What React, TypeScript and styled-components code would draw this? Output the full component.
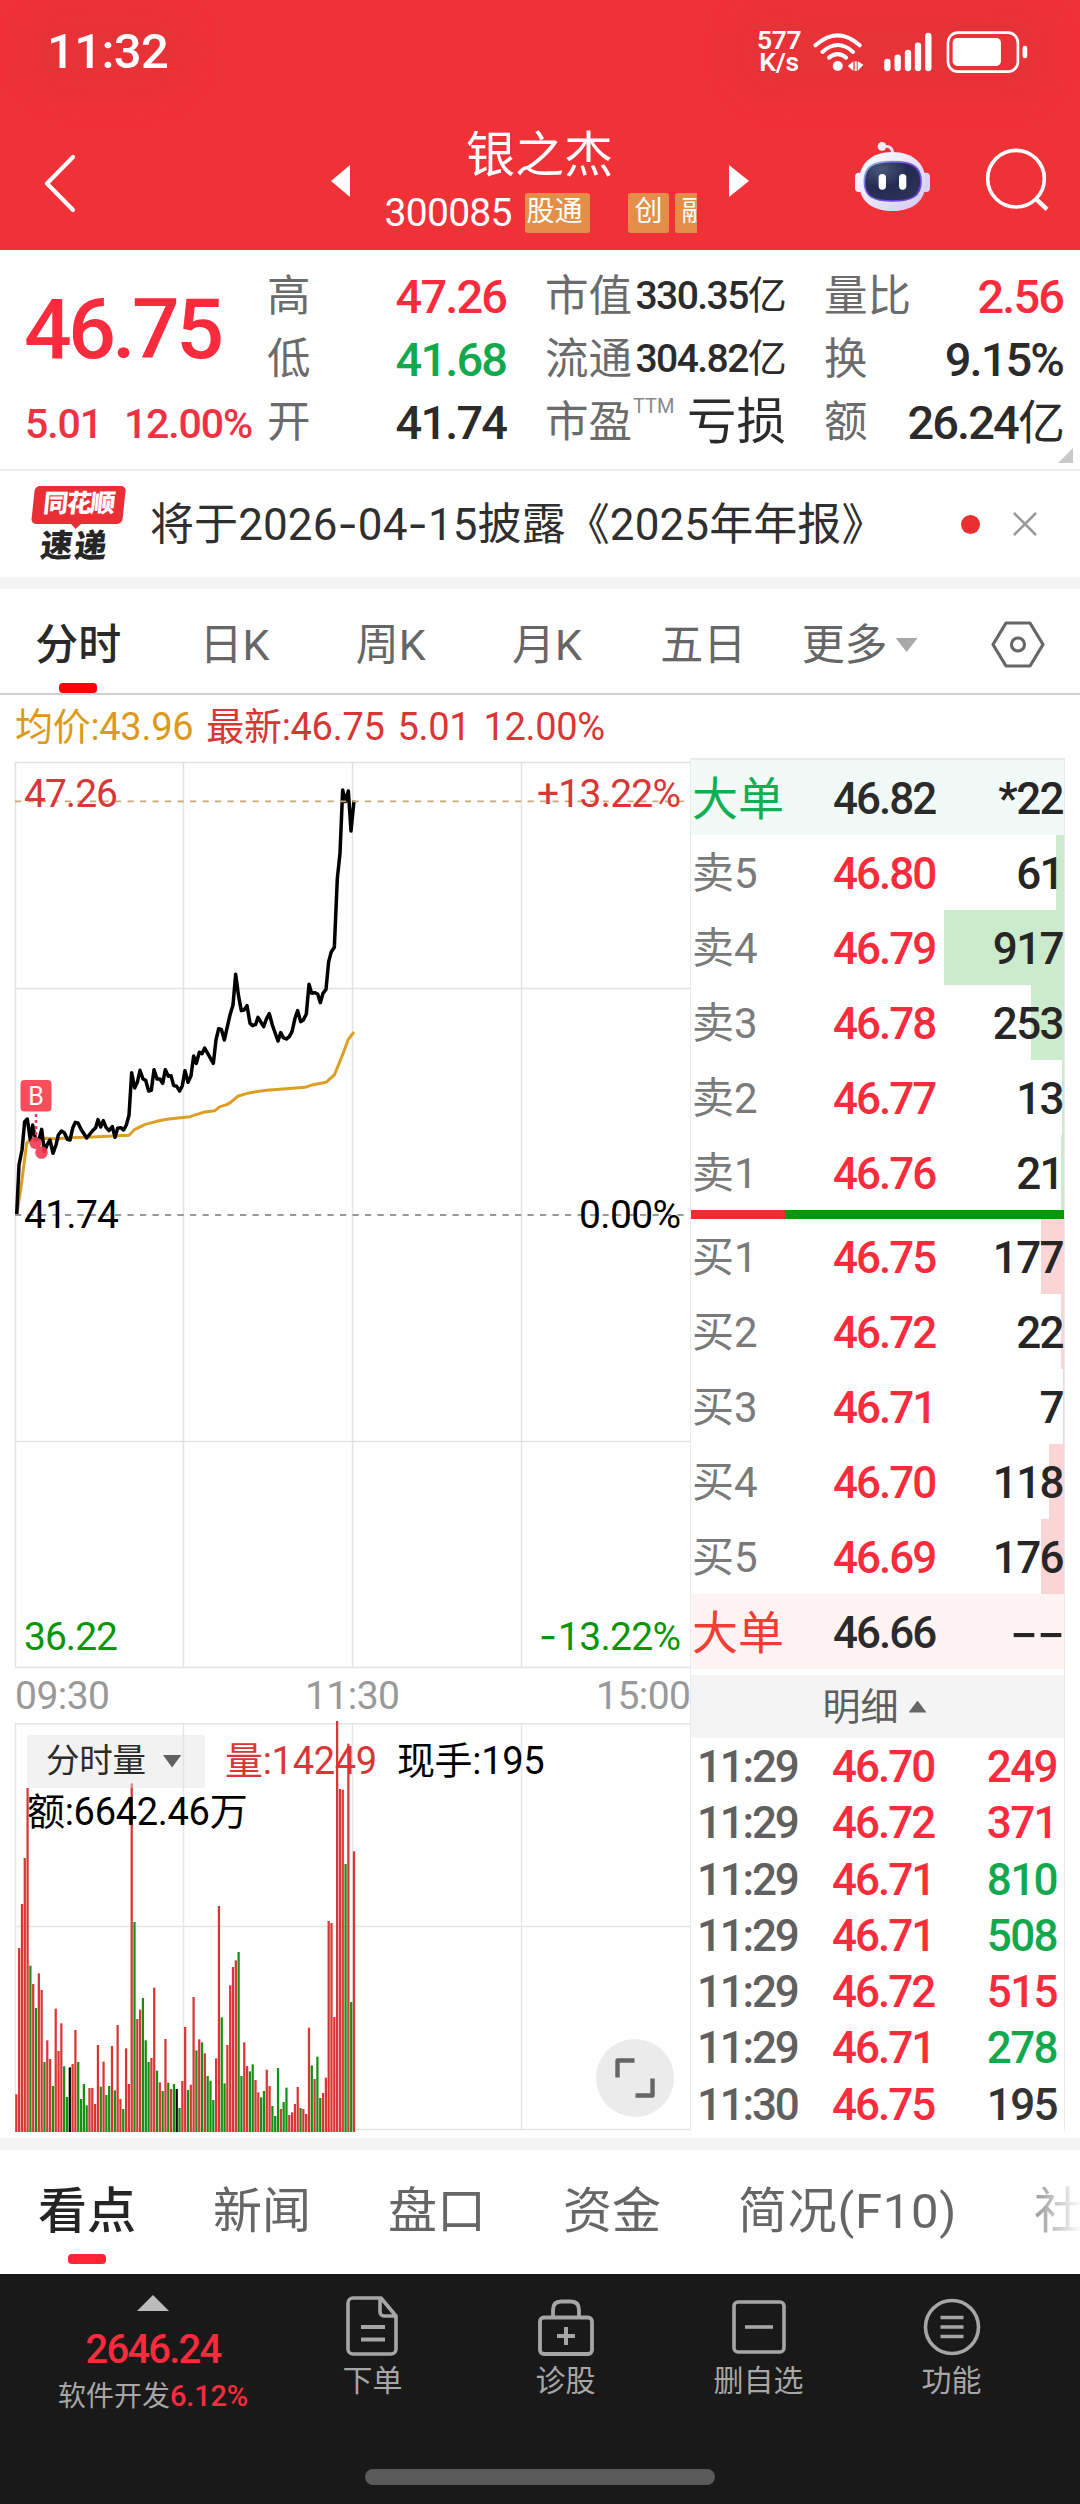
import React from "react";
import styled, { createGlobalStyle, css } from "styled-components";

const RED = "#f92b3c";
const GREEN = "#12a84e";
const DARK = "#2b2b2b";
const GREY = "#666666";
const FONT = `Roboto, "Noto Sans CJK SC", sans-serif`;

const Global = createGlobalStyle`
  html, body { margin: 0; padding: 0; background: #fff; }
  * { box-sizing: border-box; }
  svg { display: block; flex: none; overflow: visible; }
`;

const Page = styled.main`
  width: 1080px;
  height: 2504px;
  display: flex;
  flex-direction: column;
  background: #fff;
  font-family: ${FONT};
  overflow: hidden;
  white-space: nowrap;
`;

/* ---------- header ---------- */
const Header = styled.header`
  height: 250px;
  flex: none;
  background: #f13138;
  color: #fff;
`;
const StatusBar = styled.div`
  height: 104px;
  padding: 0 51px 0 47px;
  display: flex;
  justify-content: space-between;
  align-items: center;
`;
const halo = css`
  background: rgba(150, 60, 60, 0.1);
  box-shadow: 0 0 34px 26px rgba(150, 60, 60, 0.1);
  border-radius: 20px;
`;
const Clock = styled.div`
  ${halo}
  font-size: 49px;
  font-weight: 500;
  line-height: 42px;
  letter-spacing: -0.6px;
`;
const StatusIcons = styled.div`
  ${halo}
  display: flex;
  align-items: center;
  gap: 12px;
`;
const Speed = styled.div`
  font-size: 26.5px;
  line-height: 22px;
  font-weight: 600;
  text-align: center;
  letter-spacing: -0.4px;
  width: 44px;
  padding-bottom: 3px;
`;
const SpeedLine = styled.div`
  height: 22px;
`;
const NavBar = styled.div`
  height: 146px;
  display: grid;
  grid-template-columns: 331px 418px 331px;
`;
const BackCell = styled.div`
  padding: 51px 0 0 44px;
`;
const Stock = styled.div`
  display: grid;
  grid-template-columns: 19px 1fr 20px;
  align-items: start;
`;
const ArrowCell = styled.div`
  padding-top: 61px;
`;
const StockInfo = styled.div`
  display: flex;
  flex-direction: column;
  align-items: center;
`;
const StockName = styled.div`
  font-size: 49px;
  line-height: 60px;
  padding-top: 22px;
`;
const CodeRow = styled.div`
  display: flex;
  align-items: center;
  height: 40px;
  margin-top: 7px;
`;
const Code = styled.div`
  font-size: 39px;
  line-height: 40px;
  width: 142px;
  padding-left: 2px;
  letter-spacing: -0.7px;
`;
const Tags = styled.div`
  display: flex;
  width: 172px;
  overflow: hidden;
`;
const Tag = styled.div<{ $w: number; $gap?: number; $shift?: number }>`
  width: ${(p) => p.$w}px;
  height: 40px;
  flex: none;
  margin-right: ${(p) => p.$gap ?? 0}px;
  background: #e58e4a;
  border-radius: 3px;
  font-size: 28px;
  line-height: 38px;
  text-indent: ${(p) => p.$shift ?? 7}px;
  overflow: hidden;
`;
const HeaderActions = styled.div`
  display: flex;
  gap: 56px;
  padding: 38px 0 0 106px;
`;
const SearchSlot = styled.div`
  padding-top: 6px;
`;

/* ---------- quote panel ---------- */
const Quote = styled.section`
  height: 221px;
  flex: none;
  padding: 15px 16px 0 26px;
  display: flex;
  border-bottom: 2px solid #ececec;
  position: relative;
`;
const PriceCol = styled.div`
  width: 241px;
  color: ${RED};
`;
const BigPrice = styled.div`
  font-size: 84px;
  font-weight: 500;
  line-height: 130px;
  height: 128px;
  letter-spacing: -3.6px;
  margin-left: -2px;
`;
const Change = styled.div`
  font-size: 41px;
  line-height: 62px;
  color: #ee3143;
  font-weight: 500;
  display: flex;
  gap: 22px;
  letter-spacing: -1.1px;
  margin-left: -1px;
`;
const StatCol = styled.div<{ $w: number; $gap: number }>`
  width: ${(p) => p.$w}px;
  margin-right: ${(p) => p.$gap}px;
`;
const Stat = styled.div`
  height: 63px;
  display: flex;
  justify-content: space-between;
  align-items: center;
  line-height: 63px;
`;
const StatLabel = styled.span`
  font-size: 43.5px;
  color: #6b6b6b;
`;
const Ttm = styled.sup`
  font-size: 20px;
  line-height: 20px;
  color: #888;
  vertical-align: 24px;
  margin-left: 1px;
`;
const StatValue = styled.span<{ $c?: string; $s?: number; $thin?: boolean }>`
  font-size: ${(p) => p.$s ?? 47}px;
  font-weight: ${(p) => (p.$thin ? 400 : 500)};
  letter-spacing: ${(p) => (p.$thin ? 0 : -0.04)}em;
  margin-right: ${(p) => (p.$thin ? 0 : 0.02)}em;
  color: ${(p) => p.$c ?? DARK};
`;
const Unit = styled.span`
  font-weight: 400;
`;
const Corner = styled.div`
  position: absolute;
  right: 7px;
  bottom: 6px;
  border-left: 15px solid transparent;
  border-bottom: 15px solid #c8c8c8;
`;

/* ---------- notice ---------- */
const Notice = styled.section`
  height: 106px;
  flex: none;
  display: flex;
  align-items: center;
  padding: 0 43px 0 31px;
`;
const Logo = styled.div`
  width: 93px;
  margin-right: 26px;
  display: flex;
  flex-direction: column;
  transform: skewX(-6deg);
  font-weight: 900;
`;
const LogoTop = styled.div`
  position: relative;
  width: 91px;
  height: 38px;
  border-radius: 5px;
  background: #e92f33;
  color: #fff;
  font-size: 25px;
  line-height: 36px;
  letter-spacing: -1.5px;
  text-align: center;
  &::after {
    content: "";
    position: absolute;
    left: 39px;
    top: 37px;
    border: 6px solid transparent;
    border-top: 6px solid #e92f33;
    border-bottom: 0;
  }
`;
const LogoBottom = styled.div`
  margin-left: 12px;
  font-size: 32px;
  line-height: 34px;
  padding-top: 5px;
  letter-spacing: 2px;
  color: #262626;
`;
const NoticeText = styled.div`
  flex: 1;
  font-size: 44px;
  letter-spacing: 0.1px;
  color: #2f2f2f;
  line-height: 60px;
`;
const Hyphen = styled.span`
  font-family: Inter, sans-serif;
`;
const WideHyphens = styled(Hyphen)`
  display: inline-block;
  transform: scaleX(1.45);
  transform-origin: 100% 50%;
`;
const Dot = styled.div`
  width: 19px;
  height: 19px;
  border-radius: 50%;
  background: #e93030;
  margin-right: 33px;
`;
const Band = styled.div`
  height: 12px;
  flex: none;
  background: #f4f4f4;
`;

/* ---------- period tabs ---------- */
const PeriodTabs = styled.nav`
  height: 106px;
  flex: none;
  display: flex;
  border-bottom: 2px solid #d0d0d0;
`;
const PeriodTab = styled.div<{ $on?: boolean }>`
  width: 156.3px;
  display: flex;
  flex-direction: column;
  align-items: center;
  font-size: 43px;
  line-height: 60px;
  padding-top: 26px;
  color: ${(p) => (p.$on ? "#2a2a2a" : GREY)};
  font-weight: ${(p) => (p.$on ? 500 : 400)};
`;
const MoreLabel = styled.span`
  display: flex;
  align-items: center;
  gap: 8px;
`;
const Underline = styled.i<{ $c: string; $t: number }>`
  width: 38px;
  height: 10px;
  border-radius: 4px;
  margin-top: ${(p) => p.$t}px;
  background: ${(p) => p.$c};
`;
const Triangle = styled.i<{ $w: number; $h: number; $c: string; $up?: boolean }>`
  width: ${(p) => p.$w}px;
  height: ${(p) => p.$h}px;
  background: ${(p) => p.$c};
  clip-path: ${(p) => (p.$up ? "polygon(50% 0, 100% 100%, 0 100%)" : "polygon(0 0, 100% 0, 50% 100%)")};
`;
const SettingsCell = styled.div`
  padding: 32px 0 0 53px;
`;

/* ---------- summary ---------- */
const Summary = styled.div`
  height: 63px;
  flex: none;
  display: flex;
  gap: 13px;
  padding-left: 15px;
  font-size: 38px;
  line-height: 65px;
  letter-spacing: -0.3px;
  color: #d93636;
`;
const Average = styled.span`
  color: #dc9a1a;
`;

/* ---------- chart + order book ---------- */
const Trading = styled.section`
  height: 1380px;
  flex: none;
  display: flex;
`;
const ChartCol = styled.div`
  width: 690px;
`;
const VolumeArea = styled.div`
  position: relative;
  height: 408px;
`;
const VolumeTexts = styled.div`
  position: absolute;
  left: 27px;
  top: 10px;
  font-size: 39px;
  line-height: 56px;
  letter-spacing: -0.3px;
`;
const VolumeLine = styled.div`
  display: flex;
  align-items: center;
`;
const IndicatorButton = styled.div`
  width: 178px;
  height: 53px;
  border-radius: 3px;
  background: rgba(226, 226, 226, 0.45);
  color: #2b2b2b;
  font-size: 33.5px;
  display: flex;
  align-items: center;
  padding-left: 19px;
  gap: 17px;
  margin-right: 20px;
`;
const VolText = styled.span<{ $c: string; $mr?: number }>`
  color: ${(p) => p.$c};
  font-size: 38px;
  margin-right: ${(p) => p.$mr ?? 0}px;
`;
const Amount = styled.div`
  line-height: 47px;
  font-size: 38px;
`;
const Expand = styled.div`
  position: absolute;
  left: 596px;
  top: 316px;
  width: 78px;
  height: 78px;
  border-radius: 50%;
  background: #ebebeb;
  display: grid;
  place-items: center;
`;
const Book = styled.div`
  width: 375px;
  height: 1373px;
  border: solid #eaeaea;
  border-width: 2px 1px 0 1px;
`;
const BookRow = styled.div<{ $bg?: string }>`
  position: relative;
  height: 75px;
  display: grid;
  grid-template-columns: 141px 106px 1fr;
  padding: 0 2px 0 1px;
  background: ${(p) => p.$bg ?? "transparent"};
  line-height: 78px;
`;
const DepthBar = styled.i<{ $c: string }>`
  position: absolute;
  right: 0;
  top: 0;
  height: 75px;
  background: ${(p) => p.$c};
`;
const BookLabel = styled.span<{ $c?: string; $big?: boolean }>`
  position: relative;
  font-size: ${(p) => (p.$big ? 46 : 42)}px;
  color: ${(p) => p.$c ?? "#7a7a7a"};
`;
const BookPrice = styled.span<{ $c?: string }>`
  position: relative;
  font-size: 44px;
  font-weight: 500;
  letter-spacing: -2px;
  color: ${(p) => p.$c ?? RED};
`;
const BookVolume = styled.span<{ $c?: string }>`
  position: relative;
  font-size: 44px;
  font-weight: 500;
  letter-spacing: -1.6px;
  margin-right: -1px;
  text-align: right;
  color: ${(p) => p.$c ?? "#262626"};
`;
const Ratio = styled.div`
  height: 9px;
  background: linear-gradient(90deg, #e93030 0 25.1%, #009900 25.1%);
`;
const DetailHead = styled.div`
  height: 63px;
  margin-top: 6px;
  background: #f4f4f4;
  color: #5e5e5e;
  font-size: 38px;
  line-height: 62px;
  display: flex;
  align-items: center;
  justify-content: center;
  gap: 10px;
  padding-right: 6px;
`;
const TickRow = styled.div`
  height: 56.3px;
  display: grid;
  grid-template-columns: 135px 106px 1fr;
  padding: 0 8px 0 6px;
  line-height: 58px;
`;
const TickTime = styled(BookPrice)`
  color: #606060;
  letter-spacing: -2.2px;
`;

/* ---------- bottom ---------- */
const InfoTabs = styled.nav`
  height: 124px;
  flex: none;
  display: flex;
  gap: 77px;
  padding: 30px 0 0 38px;
  font-size: 49px;
  line-height: 64px;
  color: ${GREY};
  overflow: hidden;
`;
const InfoTab = styled.div<{ $on?: boolean; $fade?: boolean; $ls?: number }>`
  flex: none;
  display: flex;
  flex-direction: column;
  align-items: center;
  letter-spacing: ${(p) => p.$ls ?? 0}px;
  ${(p) => p.$on && css`color: #242424; font-weight: 500;`}
  ${(p) =>
    p.$fade &&
    css`
      color: transparent;
      background: linear-gradient(90deg, #999 0, #fff 48px);
      background-clip: text;
      -webkit-background-clip: text;
    `}
`;
const BottomBar = styled.footer`
  height: 230px;
  flex: none;
  background: #191919;
  display: flex;
  flex-direction: column;
  align-items: center;
  color: #a6a6a6;
`;
const BottomItems = styled.div`
  display: flex;
  width: 1080px;
  height: 195px;
`;
const IndexItem = styled.div`
  width: 276px;
  padding: 21px 0 0 30px;
  display: flex;
  flex-direction: column;
  align-items: center;
`;
const IndexValue = styled.div`
  color: ${RED};
  font-size: 40px;
  font-weight: 500;
  line-height: 44px;
  margin-top: 17px;
  letter-spacing: -1.8px;
`;
const IndexName = styled.div`
  font-size: 28px;
  line-height: 40px;
  margin-top: 4px;
`;
const IndexPct = styled.span`
  color: ${RED};
  font-weight: 500;
  font-size: 29px;
  letter-spacing: -0.2px;
`;
const NavItem = styled.div`
  width: 193px;
  padding-top: 22px;
  display: flex;
  flex-direction: column;
  align-items: center;
  font-size: 30px;
  line-height: 40px;
  gap: 5px;
`;
const HomeIndicator = styled.div`
  width: 350px;
  height: 16px;
  border-radius: 8px;
  background: #5a5a5a;
`;

/* ---------- data ---------- */
const PRICE =
  "50,1365 57,1215 66,1170 74,1085 82,1077 91,1140 98,1095 107,1140 118,1135 125,1108 133,1175 141,1155 150,1140 159,1180 168,1155 175,1125 184,1113 193,1118 202,1138 210,1140 218,1105 226,1087 234,1089 243,1108 260,1134 277,1113 287,1103 294,1079 302,1101 310,1082 318,1102 327,1112 337,1100 345,1132 353,1105 362,1103 371,1110 379,1095 387,1066 395,938 404,984 412,967 420,931 429,957 437,961 446,993 454,991 462,929 471,957 480,957 488,970 496,929 505,949 513,947 521,977 530,979 539,993 547,977 555,932 564,967 573,947 581,888 589,910 598,877 606,881 614,864 640,910 648,840 656,806 664,808 673,840 682,800 690,765 699,735 707,643 716,710 724,752 732,750 741,737 750,790 758,797 767,793 774,772 791,800 800,775 808,761 817,795 834,843 842,818 850,833 859,837 868,830 876,815 885,775 893,752 902,785 910,780 919,762 927,673 935,700 944,698 953,702 961,728 969,700 978,688 986,605 994,575 1003,562 1012,355 1020,280 1028,90 1036,125 1045,93 1053,213 1062,122";
const AVERAGE =
  "50,1365 62,1290 80,1150 90,1140 140,1135 170,1137 200,1133 260,1132 387,1126 403,1109 434,1094 470,1084 500,1078 570,1070 610,1057 645,1052 660,1040 680,1034 692,1027 715,1008 750,998 800,991 860,986 915,982 940,974 978,967 1003,945 1028,884 1045,838 1062,816";

const VOLUME =
  "1183r 744r 612r 474r 264r 797g 852r 924g 820r 870r 1086g 1021r 1077r 1158g 926r 1053r 970r 1099g 1191g 1102k 1092r 990r 1086g 1197g 1152g 1216g 1164r 1164r 1212r 1035r 1160g 1085r 1185g 1158g 1038r 1171g 975r 1197r 1227g 1045r 1152r 250r 666g 957r 929r 894g 1021g 1086g 1074r 863r 1112g 1147r 1173g 1017r 1148g 1167r 1152g 1167k 1224g 1143r 981r 1170g 1154r 891r 1051g 1018r 1027g 1060r 1128g 1142g 1200g 1075r 618r 952g 1150g 1035r 856r 801r 781r 756g 1128g 1027r 1098r 1114g 1093g 1140r 1177r 1192g 1173g 1109r 1158r 1218g 1248g 1104g 1227r 1206g 1163g 1245r 1237r 1212r 1161r 1224g 1227r 1242r 983r 1096g 1137r 1070g 1194g 1179r 1133r 663r 669r 951r 63r 267r 269r 492g 131r 906g 454r"
    .split(" ")
    .map((s) => ({ top: parseInt(s, 10) / 3, kind: s.slice(-1) }));
const BAR_COLOR: Record<string, string> = { r: "#d93636", g: "#149014", k: "#000" };

const SELLS = [
  ["卖5", "46.80", "61", 8],
  ["卖4", "46.79", "917", 120],
  ["卖3", "46.78", "253", 33],
  ["卖2", "46.77", "13", 2],
  ["卖1", "46.76", "21", 3],
] as const;
const BUYS = [
  ["买1", "46.75", "177", 23],
  ["买2", "46.72", "22", 3],
  ["买3", "46.71", "7", 1],
  ["买4", "46.70", "118", 15],
  ["买5", "46.69", "176", 23],
] as const;
const TICKS = [
  ["11:29", "46.70", "249", RED],
  ["11:29", "46.72", "371", RED],
  ["11:29", "46.71", "810", GREEN],
  ["11:29", "46.71", "508", GREEN],
  ["11:29", "46.72", "515", RED],
  ["11:29", "46.71", "278", GREEN],
  ["11:30", "46.75", "195", "#333"],
] as const;

/* ---------- drawings ---------- */
const SignalIcons = () => (
  <svg width="216" height="43.3" viewBox="222 30 648 130" fill="none" stroke="#fff" strokeLinecap="round">
    <g strokeWidth="12">
      <path d="M229 76 Q296 16 362 76" />
      <path d="M250 96 Q296 54 342 96" />
      <path d="M270 113 Q296 92 321 113" />
    </g>
    <circle cx="296" cy="138" r="15" fill="#fff" stroke="none" />
    <path d="M326 138 L343 124 V153 Z M373 134 L356 124 V153 Z M347 124 h6 v29 h-6 Z" fill="#fff" stroke="none" />
    <g strokeWidth="19">
      <path d="M445 126 V144 M476 113 V144 M507 99 V144 M537 77 V144 M568 48 V144" />
    </g>
    <rect x="627" y="38" width="210" height="117" rx="30" strokeWidth="8" />
    <rect x="641" y="54" width="145" height="84" rx="14" fill="#fff" stroke="none" />
    <rect x="851" y="77" width="14" height="38" rx="7" fill="#fff" stroke="none" />
  </svg>
);

const Robot = () => (
  <svg width="75" height="69" viewBox="345 370 225 207">
    <defs>
      <linearGradient id="shell" x1="0" y1="0" x2="1" y2="1">
        <stop offset="0" stopColor="#ffffff" />
        <stop offset="0.55" stopColor="#e6e2fa" />
        <stop offset="1" stopColor="#cfc8f2" />
      </linearGradient>
      <linearGradient id="rim" x1="0" y1="0" x2="1" y2="1">
        <stop offset="0" stopColor="#8fd0f0" />
        <stop offset="0.4" stopColor="#7a4fe0" />
        <stop offset="1" stopColor="#6a3fd8" />
      </linearGradient>
      <radialGradient id="visor" cx="0.3" cy="0.2" r="0.9">
        <stop offset="0" stopColor="#4a5778" />
        <stop offset="0.5" stopColor="#242c52" />
        <stop offset="1" stopColor="#2d3358" />
      </radialGradient>
    </defs>
    <path d="M430 383 Q458 380 458 405" fill="none" stroke="#eadff5" strokeWidth="9" />
    <circle cx="426" cy="383" r="13" fill="#f0ecfb" />
    <rect x="345" y="462" width="26" height="58" rx="12" fill="#f3f0fc" />
    <rect x="544" y="462" width="26" height="58" rx="12" fill="#d9d4f3" />
    <path d="M457 400 C520 400 557 436 557 490 C557 546 520 577 457 577 C394 577 357 546 357 490 C357 436 394 400 457 400Z" fill="url(#shell)" />
    <path d="M457 429 C515 429 543 442 543 488 C543 534 515 547 457 547 C400 547 373 534 373 488 C373 442 400 429 457 429Z" fill="url(#visor)" stroke="url(#rim)" strokeWidth="5" />
    <rect x="416" y="466" width="22" height="47" rx="11" fill="#fff" />
    <rect x="477" y="466" width="22" height="47" rx="11" fill="#fff" />
  </svg>
);

const vLines = [183.5, 352.5, 521.5];

const PriceChart = () => (
  <svg width="690" height="965" viewBox="0 758 690 965" fontFamily={FONT} fontSize="39">
    <g stroke="#e2e2e2" strokeWidth="1.4" fill="none">
      <path d="M15.5 762 V1667 M15 762.5 H690 M15 988.5 H690 M15 1441.5 H690 M15 1667.5 H690" />
      {vLines.map((x) => (
        <path key={x} d={`M${x} 762 V1667`} />
      ))}
    </g>
    <g fill="none" strokeLinejoin="round" transform="translate(0 760) scale(0.33333)">
      <polyline points={AVERAGE} stroke="#dc9f24" strokeWidth="9" />
      <polyline points={PRICE} stroke="#000" strokeWidth="10.5" />
    </g>
    <g strokeWidth="1.8" strokeDasharray="6.2 6.3">
      <path d="M15 801.3 H684" stroke="#c9a877" />
      <path d="M15 1215 H684" stroke="#999" />
    </g>
    <g fill="#d93636">
      <text x="24" y="807" textLength="94">47.26</text>
      <text x="537" y="807" textLength="144">+13.22%</text>
    </g>
    <g fill="#000">
      <text x="24" y="1228" textLength="95">41.74</text>
      <text x="579" y="1228" textLength="102">0.00%</text>
    </g>
    <g fill="#0a950a">
      <text x="24" y="1650" textLength="94">36.22</text>
      <text x="558" y="1650" textLength="123">13.22%</text>
      <text x="539" y="1650" fontFamily="Inter">-</text>
    </g>
    <g fill="#999">
      <text x="15" y="1709" textLength="95">09:30</text>
      <text x="305" y="1709" textLength="95">11:30</text>
      <text x="596" y="1709" textLength="95">15:00</text>
    </g>
    <g fill="#f5364f">
      <path d="M36 1114 V1135" stroke="#f5364f" strokeWidth="2.5" strokeDasharray="3 3" />
      <circle cx="35.5" cy="1143" r="6" opacity="0.9" />
      <circle cx="41.5" cy="1152.5" r="6.3" opacity="0.9" />
    </g>
    <rect x="20.5" y="1080" width="31" height="31.5" rx="4" fill="#fb4d5b" />
    <text x="36" y="1104.5" textAnchor="middle" fontSize="25" fill="#fff">B</text>
  </svg>
);

const VolumeChart = () => (
  <svg width="690" height="408" viewBox="0 1723 690 408">
    <g stroke="#e4e4e4" strokeWidth="1.4" fill="none">
      <path d="M15.5 1723 V2130 M15 1723.7 H690 M15 1926.5 H690 M15 2129.5 H690" />
      {vLines.map((x) => (
        <path key={x} d={`M${x} 1723 V2130`} />
      ))}
    </g>
    {VOLUME.map((b, i) => (
      <rect key={i} x={15.2 + i * 2.814} y={1700 + b.top} width="2.25" height={432 - b.top} fill={BAR_COLOR[b.kind]} />
    ))}
  </svg>
);

const DocIcon = () => (
  <svg width="60" height="60" viewBox="0 0 60 60" fill="none" stroke="#a6a6a6" strokeWidth="3.6" strokeLinejoin="round">
    <path d="M10 2 H38 L53 20 V53 a5 5 0 0 1 -5 5 H10 a5 5 0 0 1 -5 -5 V7 a5 5 0 0 1 5 -5Z M37 2 V16 a4 4 0 0 0 4 4 H53" />
    <path d="M18 31 H42 M18 43.5 H42" strokeWidth="4" />
  </svg>
);
const LockIcon = () => (
  <svg width="60" height="60" viewBox="0 0 60 60" fill="none" stroke="#a6a6a6" strokeWidth="3.8" strokeLinejoin="round">
    <rect x="4" y="21.5" width="52" height="36.5" rx="4" />
    <path d="M17 21 V14 Q17 5.5 25 5.5 H35 Q43 5.5 43 14 V21" />
    <path d="M30 31 V49 M21 40 H39" strokeWidth="4" />
  </svg>
);
const RemoveIcon = () => (
  <svg width="60" height="60" viewBox="0 0 60 60" fill="none" stroke="#a6a6a6" strokeWidth="3.6">
    <rect x="5" y="6" width="50" height="50" rx="4" />
    <path d="M16 31 H44" />
  </svg>
);
const MenuIcon = () => (
  <svg width="60" height="60" viewBox="0 0 60 60" fill="none" stroke="#a6a6a6" strokeWidth="3.6">
    <circle cx="30" cy="31" r="26.5" />
    <path d="M18.5 21.5 H41.5 M18.5 31 H41.5 M18.5 40.5 H41.5" />
  </svg>
);

const PERIODS = ["日K", "周K", "月K", "五日"];

export default function App() {
  return (
    <Page>
      <Global />
      <Header>
        <StatusBar>
          <Clock>11:32</Clock>
          <StatusIcons>
            <Speed>
              <SpeedLine>577</SpeedLine>
              <SpeedLine>K/s</SpeedLine>
            </Speed>
            <SignalIcons />
          </StatusIcons>
        </StatusBar>
        <NavBar>
          <BackCell>
            <svg width="31" height="57" viewBox="0 0 31 57" fill="none" stroke="#fff" strokeWidth="4.2">
              <path d="M29 2 L3 28.5 L29 55" strokeLinecap="round" strokeLinejoin="round" />
            </svg>
          </BackCell>
          <Stock>
            <ArrowCell>
              <svg width="19" height="32" viewBox="0 0 19 32">
                <path d="M19 0 V32 L0 16Z" fill="#fff" />
              </svg>
            </ArrowCell>
            <StockInfo>
              <StockName>银之杰</StockName>
              <CodeRow>
                <Code>300085</Code>
                <Tags>
                  <Tag $w={65} $gap={38} $shift={2}>股通</Tag>
                  <Tag $w={41} $gap={6}>创</Tag>
                  <Tag $w={41}>融</Tag>
                </Tags>
              </CodeRow>
            </StockInfo>
            <ArrowCell>
              <svg width="20" height="32" viewBox="0 0 20 32">
                <path d="M0 0 V32 L20 16Z" fill="#fff" />
              </svg>
            </ArrowCell>
          </Stock>
          <HeaderActions>
            <Robot />
            <SearchSlot>
              <svg width="64" height="64" viewBox="738 385 192 192" fill="none" stroke="#fff" strokeWidth="11">
                <circle cx="828" cy="477" r="85" />
                <path d="M886 536 L921 569" strokeWidth="13" />
              </svg>
            </SearchSlot>
          </HeaderActions>
        </NavBar>
      </Header>

      <Quote>
        <PriceCol>
          <BigPrice>46.75</BigPrice>
          <Change>
            <span>5.01</span>
            <span>12.00%</span>
          </Change>
        </PriceCol>
        <StatCol $w={240} $gap={38}>
          <Stat>
            <StatLabel>高</StatLabel>
            <StatValue $c={RED}>47.26</StatValue>
          </Stat>
          <Stat>
            <StatLabel>低</StatLabel>
            <StatValue $c={GREEN}>41.68</StatValue>
          </Stat>
          <Stat>
            <StatLabel>开</StatLabel>
            <StatValue>41.74</StatValue>
          </Stat>
        </StatCol>
        <StatCol $w={241} $gap={38}>
          <Stat>
            <StatLabel>市值</StatLabel>
            <StatValue $s={39}>
              330.35<Unit>亿</Unit>
            </StatValue>
          </Stat>
          <Stat>
            <StatLabel>流通</StatLabel>
            <StatValue $s={39}>
              304.82<Unit>亿</Unit>
            </StatValue>
          </Stat>
          <Stat>
            <StatLabel>
              市盈<Ttm>TTM</Ttm>
            </StatLabel>
            <StatValue $s={49.5} $thin>
              亏损
            </StatValue>
          </Stat>
        </StatCol>
        <StatCol $w={240} $gap={0}>
          <Stat>
            <StatLabel>量比</StatLabel>
            <StatValue $c={RED}>2.56</StatValue>
          </Stat>
          <Stat>
            <StatLabel>换</StatLabel>
            <StatValue>9.15%</StatValue>
          </Stat>
          <Stat>
            <StatLabel>额</StatLabel>
            <StatValue>
              26.24<Unit>亿</Unit>
            </StatValue>
          </Stat>
        </StatCol>
        <Corner />
      </Quote>

      <Notice>
        <Logo>
          <LogoTop>同花顺</LogoTop>
          <LogoBottom>速递</LogoBottom>
        </Logo>
        <NoticeText>
          将于2026<Hyphen>-</Hyphen>04<Hyphen>-</Hyphen>15披露《2025年年报》
        </NoticeText>
        <Dot />
        <svg width="24" height="24" viewBox="0 0 24 24" stroke="#999" strokeWidth="2.6">
          <path d="M1 1 L23 23 M23 1 L1 23" />
        </svg>
      </Notice>
      <Band />

      <PeriodTabs>
        <PeriodTab $on>
          分时
          <Underline $c="#ff0000" $t={8} />
        </PeriodTab>
        {PERIODS.map((t) => (
          <PeriodTab key={t}>{t}</PeriodTab>
        ))}
        <PeriodTab>
          <MoreLabel>
            更多
            <Triangle $w={22} $h={14} $c="#a8a8a8" />
          </MoreLabel>
        </PeriodTab>
        <SettingsCell>
          <svg width="54" height="47" viewBox="0 0 54 47" fill="none" stroke="#666" strokeWidth="3.2" strokeLinejoin="round">
            <path d="M15 2 H39 L52 23.5 L39 45 H15 L2 23.5Z" />
            <circle cx="27" cy="23.5" r="6.5" />
          </svg>
        </SettingsCell>
      </PeriodTabs>

      <Summary>
        <Average>均价:43.96</Average>
        <span>最新:46.75</span>
        <span>5.01</span>
        <span>12.00%</span>
      </Summary>

      <Trading>
        <ChartCol>
          <PriceChart />
          <VolumeArea>
            <VolumeTexts>
              <VolumeLine>
                <IndicatorButton>
                  分时量
                  <Triangle $w={19} $h={13} $c="#606060" />
                </IndicatorButton>
                <VolText $c="#d93636" $mr={20}>量:14249</VolText>
                <VolText $c="#000">现手:195</VolText>
              </VolumeLine>
              <Amount>额:6642.46万</Amount>
            </VolumeTexts>
            <VolumeChart />
            <Expand>
              <svg width="40" height="40" viewBox="0 0 40 40" fill="none" stroke="#666" strokeWidth="4.4">
                <path d="M2.5 19.5 V2.5 H19.5 M37.5 20.5 V37.5 H20.5" strokeLinejoin="round" />
              </svg>
            </Expand>
          </VolumeArea>
        </ChartCol>
        <Book>
          <BookRow $bg="#f1faf6">
            <BookLabel $big $c="#12ae54">大单</BookLabel>
            <BookPrice $c={DARK}>46.82</BookPrice>
            <BookVolume>*22</BookVolume>
          </BookRow>
          {SELLS.map(([l, p, v, w]) => (
            <BookRow key={l}>
              <DepthBar $c="#cceacc" style={{ width: w }} />
              <BookLabel>{l}</BookLabel>
              <BookPrice>{p}</BookPrice>
              <BookVolume>{v}</BookVolume>
            </BookRow>
          ))}
          <Ratio />
          {BUYS.map(([l, p, v, w]) => (
            <BookRow key={l}>
              <DepthBar $c="#fbd5d5" style={{ width: w }} />
              <BookLabel>{l}</BookLabel>
              <BookPrice>{p}</BookPrice>
              <BookVolume>{v}</BookVolume>
            </BookRow>
          ))}
          <BookRow $bg="#fff4f3">
            <BookLabel $big $c="#f23f36">大单</BookLabel>
            <BookPrice $c={DARK}>46.66</BookPrice>
            <BookVolume>
              <WideHyphens>--</WideHyphens>
            </BookVolume>
          </BookRow>
          <DetailHead>
            明细
            <Triangle $w={18} $h={12} $c="#666" $up />
          </DetailHead>
          {TICKS.map(([t, p, v, c], i) => (
            <TickRow key={i}>
              <TickTime>{t}</TickTime>
              <BookPrice>{p}</BookPrice>
              <BookVolume $c={c}>{v}</BookVolume>
            </TickRow>
          ))}
        </Book>
      </Trading>
      <Band />

      <InfoTabs>
        <InfoTab $on>
          看点
          <Underline $c="#ff2436" $t={10} />
        </InfoTab>
        <InfoTab>新闻</InfoTab>
        <InfoTab>盘口</InfoTab>
        <InfoTab>资金</InfoTab>
        <InfoTab $ls={0.7}>简况(F10)</InfoTab>
        <InfoTab $fade>社</InfoTab>
      </InfoTabs>

      <BottomBar>
        <BottomItems>
          <IndexItem>
            <Triangle $w={32} $h={16} $c="#bcbcbc" $up />
            <IndexValue>2646.24</IndexValue>
            <IndexName>
              软件开发<IndexPct>6.12%</IndexPct>
            </IndexName>
          </IndexItem>
          <NavItem>
            <DocIcon />
            下单
          </NavItem>
          <NavItem>
            <LockIcon />
            诊股
          </NavItem>
          <NavItem>
            <RemoveIcon />
            删自选
          </NavItem>
          <NavItem>
            <MenuIcon />
            功能
          </NavItem>
        </BottomItems>
        <HomeIndicator />
      </BottomBar>
    </Page>
  );
}
